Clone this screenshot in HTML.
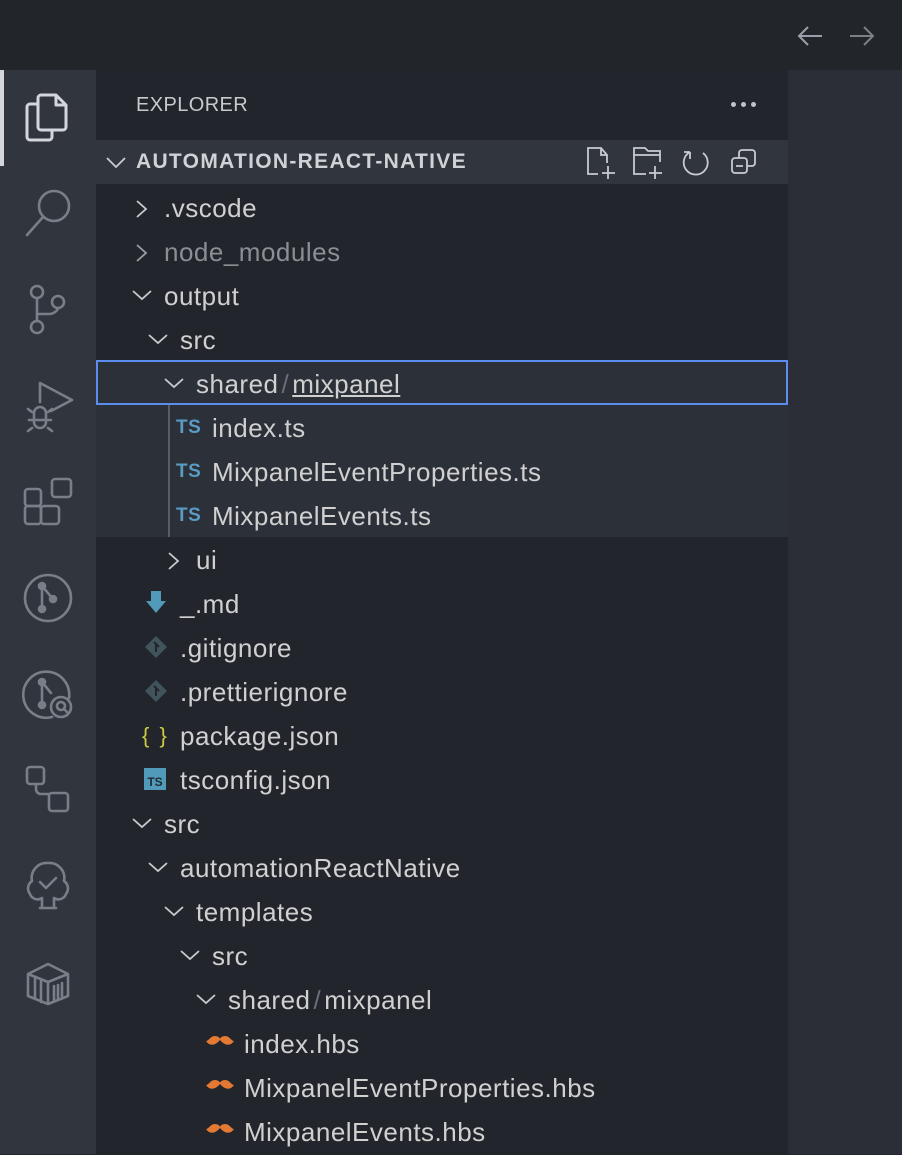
<!DOCTYPE html>
<html><head><meta charset="utf-8"><style>
*{margin:0;padding:0;box-sizing:border-box}
body{width:902px;height:1154px;background:#22252a;overflow:hidden;position:relative;font-family:"Liberation Sans",sans-serif;color:#d0d0d0}
.abs{position:absolute}
#act{left:0;top:70px;width:96px;height:1084px;background:#31353e}
#side{left:96px;top:70px;width:692px;height:1084px;background:#22252b}
#right{left:788px;top:70px;width:114px;height:1084px;background:#2b2e36}
.row{position:absolute;left:96px;width:692px;height:44px;font-size:26px;line-height:46px;white-space:nowrap;letter-spacing:0.5px}
.row span.t{position:absolute;top:0}
.row svg{position:absolute}
.ic{stroke:#7a7e87;fill:none;stroke-width:2.6;stroke-linecap:round;stroke-linejoin:round}
</style></head><body>
<div id="act" class="abs"></div>
<div class="abs" style="left:0;top:70px;width:4px;height:96px;background:#d4d6dc"></div>
<div id="side" class="abs"></div>
<div id="right" class="abs"></div>

<svg class="abs" style="left:796px;top:24px" width="28" height="24" viewBox="0 0 28 24"><path d="M26 12H3M12 3L3 12l9 9" stroke="#9aa0aa" stroke-width="2" fill="none"/></svg>
<svg class="abs" style="left:848px;top:24px" width="28" height="24" viewBox="0 0 28 24"><path d="M2 12h23M16 3l9 9-9 9" stroke="#7d8088" stroke-width="2" fill="none"/></svg>

<svg class="abs" style="left:24px;top:92px" width="48" height="52" viewBox="0 0 48 52"><path d="M14 12h-8a3 3 0 0 0-3 3v30a3 3 0 0 0 3 3h19a3 3 0 0 0 3-3v-6" stroke="#d4d6dc" stroke-width="3" fill="none"/><path d="M17 3h15l10 10v22a3 3 0 0 1-3 3H17a3 3 0 0 1-3-3V6a3 3 0 0 1 3-3zM32 3v10h10" stroke="#d4d6dc" stroke-width="3" fill="none" stroke-linejoin="round"/></svg>
<svg class="abs ic" style="left:24px;top:188px" width="50" height="50" viewBox="0 0 50 50"><circle cx="30" cy="18" r="15"/><path d="M19 29L3 47"/></svg>
<svg class="abs ic" style="left:26px;top:284px" width="44" height="52" viewBox="0 0 44 52"><circle cx="11" cy="8" r="6"/><circle cx="32" cy="18" r="6"/><circle cx="11" cy="43" r="6"/><path d="M11 14v23M11 30h12c5 0 9-4 9-6"/></svg>
<svg class="abs ic" style="left:22px;top:380px" width="52" height="56" viewBox="0 0 52 56"><path d="M18 22V3l32 17-21 11"/><path d="M7 40h22M10 32l-4-3M26 32l4-3M10 48l-4 3M26 48l4 3"/><path d="M12 33a6 6 0 0 1 12 0v9a6 6 0 0 1-12 0z"/></svg>
<svg class="abs ic" style="left:22px;top:476px" width="52" height="52" viewBox="0 0 52 52"><rect x="3" y="13" width="16" height="17" rx="3"/><rect x="3" y="30" width="16" height="18" rx="3"/><rect x="19" y="30" width="18" height="18" rx="3"/><rect x="30" y="3" width="19" height="18" rx="3"/></svg>
<svg class="abs ic" style="left:22px;top:572px" width="52" height="52" viewBox="0 0 52 52"><circle cx="26" cy="26" r="23"/><circle cx="20" cy="14" r="3" fill="#7a7e87"/><circle cx="20" cy="37" r="3" fill="#7a7e87"/><circle cx="31" cy="27" r="3" fill="#7a7e87"/><path d="M20 14v23M20 14l11 13"/></svg>
<svg class="abs ic" style="left:22px;top:668px" width="54" height="54" viewBox="0 0 54 54"><path d="M47 30A23 23 0 1 0 30 49"/><circle cx="20" cy="14" r="3" fill="#7a7e87"/><circle cx="20" cy="37" r="3" fill="#7a7e87"/><path d="M20 14v23M20 14l9 11"/><circle cx="39" cy="39" r="10"/><circle cx="39" cy="38" r="4"/><path d="M42 41l4 4"/></svg>
<svg class="abs ic" style="left:24px;top:764px" width="48" height="50" viewBox="0 0 48 50"><rect x="3" y="3" width="17" height="17" rx="3"/><rect x="25" y="29" width="19" height="18" rx="3"/><path d="M12 20v5a5 5 0 0 0 5 5h8"/></svg>
<svg class="abs ic" style="left:24px;top:860px" width="48" height="52" viewBox="0 0 48 52"><path d="M18 48v-10a8 8 0 0 1-12-4 9 9 0 0 1 2-13A15 15 0 0 1 24 3a15 15 0 0 1 16 18 9 9 0 0 1 2 13 8 8 0 0 1-12 4v10zM16 48h16"/><path d="M16 22l6 6 10-10"/></svg>
<svg class="abs ic" style="left:24px;top:960px" width="48" height="46" viewBox="0 0 48 46"><path d="M4 14l20-10 20 10v22l-20 8-20-8zM4 14l20 8 20-8M24 22v22M11 19v20M17 21v21M30 26v14M34 25v13M38 23v13"/></svg>

<div class="abs" style="left:136px;top:94px;font-size:20px;color:#c8cad0;letter-spacing:.4px">EXPLORER</div>
<div class="abs" style="left:731px;top:102px;width:30px;height:6px">
<span class="abs" style="left:0;top:0;width:5px;height:5px;border-radius:50%;background:#c0c3c9"></span>
<span class="abs" style="left:10px;top:0;width:5px;height:5px;border-radius:50%;background:#c0c3c9"></span>
<span class="abs" style="left:20px;top:0;width:5px;height:5px;border-radius:50%;background:#c0c3c9"></span></div>

<div class="abs" style="left:96px;top:140px;width:692px;height:44px;background:#31353e"></div>
<svg class="abs" style="left:105px;top:156px" width="22" height="12" viewBox="0 0 22 12"><path d="M2 2l9 9 9-9" stroke="#c8cad0" stroke-width="1.8" fill="none"/></svg>
<div class="abs" style="left:136px;top:150px;font-size:21px;font-weight:bold;color:#d0d2d6;letter-spacing:1.3px">AUTOMATION-REACT-NATIVE</div>
<svg class="abs" style="left:586px;top:146px" width="32" height="34" viewBox="0 0 32 34"><path d="M12 28H2V2h13l6 7v8M15 2v7h6M22 20v13M16 27h13" stroke="#c8cad0" stroke-width="1.8" fill="none"/></svg>
<svg class="abs" style="left:632px;top:146px" width="34" height="34" viewBox="0 0 34 34"><path d="M14 28H2V2h11l3 3h12v11M2 9h26M23 20v13M17 27h13" stroke="#c8cad0" stroke-width="1.8" fill="none"/></svg>
<svg class="abs" style="left:682px;top:148px" width="28" height="30" viewBox="0 0 28 30"><path d="M8 4A12 12 0 1 0 21 5M8 4v7M8 4H2" stroke="#c8cad0" stroke-width="1.8" fill="none"/></svg>
<svg class="abs" style="left:730px;top:148px" width="28" height="28" viewBox="0 0 28 28"><rect x="2" y="10" width="15" height="15" rx="3" stroke="#c8cad0" stroke-width="1.8" fill="none"/><path d="M9 10V5a3 3 0 0 1 3-3h10a3 3 0 0 1 3 3v10a3 3 0 0 1-3 3h-5M6 18h7" stroke="#c8cad0" stroke-width="1.8" fill="none"/></svg>

<div class="abs" style="left:96px;top:405px;width:692px;height:132px;background:#2c3039"></div>
<div class="abs" style="left:168px;top:405px;width:2px;height:132px;background:#5a5d63"></div>
<div class="abs" style="left:96px;top:360px;width:692px;height:45px;border:2px solid #5b8def;background:#2c3039"></div>

<div class="row" style="top:185px"><svg style="left:39px;top:14px" width="14" height="20" viewBox="0 0 14 20"><path d="M2 2l9 8-9 8" stroke="#c8cad0" stroke-width="1.8" fill="none"/></svg><span class="t" style="left:68px">.vscode</span></div>
<div class="row" style="top:229px;color:#8b8e94"><svg style="left:39px;top:14px" width="14" height="20" viewBox="0 0 14 20"><path d="M2 2l9 8-9 8" stroke="#9a9da3" stroke-width="1.8" fill="none"/></svg><span class="t" style="left:68px">node_modules</span></div>
<div class="row" style="top:273px"><svg style="left:35px;top:16px" width="22" height="12" viewBox="0 0 22 12"><path d="M2 2l9 8 9-8" stroke="#c8cad0" stroke-width="1.8" fill="none"/></svg><span class="t" style="left:68px">output</span></div>
<div class="row" style="top:317px"><svg style="left:51px;top:16px" width="22" height="12" viewBox="0 0 22 12"><path d="M2 2l9 8 9-8" stroke="#c8cad0" stroke-width="1.8" fill="none"/></svg><span class="t" style="left:84px">src</span></div>
<div class="row" style="top:361px"><svg style="left:67px;top:16px" width="22" height="12" viewBox="0 0 22 12"><path d="M2 2l9 8 9-8" stroke="#c8cad0" stroke-width="1.8" fill="none"/></svg><span class="t" style="left:100px">shared<span style="color:#6c6f75;margin:0 3px">/</span><span style="text-decoration:underline">mixpanel</span></span></div>
<div class="row" style="top:405px"><span class="t" style="left:80px;font-size:19px;font-weight:bold;color:#5a9bc4">TS</span><span class="t" style="left:116px">index.ts</span></div>
<div class="row" style="top:449px"><span class="t" style="left:80px;font-size:19px;font-weight:bold;color:#5a9bc4">TS</span><span class="t" style="left:116px">MixpanelEventProperties.ts</span></div>
<div class="row" style="top:493px"><span class="t" style="left:80px;font-size:19px;font-weight:bold;color:#5a9bc4">TS</span><span class="t" style="left:116px">MixpanelEvents.ts</span></div>
<div class="row" style="top:537px"><svg style="left:71px;top:14px" width="14" height="20" viewBox="0 0 14 20"><path d="M2 2l9 8-9 8" stroke="#c8cad0" stroke-width="1.8" fill="none"/></svg><span class="t" style="left:100px">ui</span></div>
<div class="row" style="top:581px"><svg style="left:49px;top:10px" width="22" height="24" viewBox="0 0 22 24"><path d="M6 0h10v10h5L11 22 1 10h5z" fill="#519aba"/></svg><span class="t" style="left:84px">_.md</span></div>
<div class="row" style="top:625px"><svg style="left:48px;top:10px" width="24" height="24" viewBox="0 0 24 24"><path d="M12 1l11 11-11 11L1 12z" fill="#41535b"/><path d="M10 7l5 5M12 9v8" stroke="#22252b" stroke-width="2"/></svg><span class="t" style="left:84px">.gitignore</span></div>
<div class="row" style="top:669px"><svg style="left:48px;top:10px" width="24" height="24" viewBox="0 0 24 24"><path d="M12 1l11 11-11 11L1 12z" fill="#41535b"/><path d="M10 7l5 5M12 9v8" stroke="#22252b" stroke-width="2"/></svg><span class="t" style="left:84px">.prettierignore</span></div>
<div class="row" style="top:713px"><span class="t" style="left:46px;font-size:22px;color:#cbcb41;letter-spacing:2px">{ }</span><span class="t" style="left:84px">package.json</span></div>
<div class="row" style="top:757px"><div style="position:absolute;left:48px;top:11px;width:22px;height:22px;background:#519aba;color:#1e2a33;font-size:12px;font-weight:bold;line-height:28px;text-align:center;letter-spacing:0">TS</div><span class="t" style="left:84px">tsconfig.json</span></div>
<div class="row" style="top:801px"><svg style="left:35px;top:16px" width="22" height="12" viewBox="0 0 22 12"><path d="M2 2l9 8 9-8" stroke="#c8cad0" stroke-width="1.8" fill="none"/></svg><span class="t" style="left:68px">src</span></div>
<div class="row" style="top:845px"><svg style="left:51px;top:16px" width="22" height="12" viewBox="0 0 22 12"><path d="M2 2l9 8 9-8" stroke="#c8cad0" stroke-width="1.8" fill="none"/></svg><span class="t" style="left:84px">automationReactNative</span></div>
<div class="row" style="top:889px"><svg style="left:67px;top:16px" width="22" height="12" viewBox="0 0 22 12"><path d="M2 2l9 8 9-8" stroke="#c8cad0" stroke-width="1.8" fill="none"/></svg><span class="t" style="left:100px">templates</span></div>
<div class="row" style="top:933px"><svg style="left:83px;top:16px" width="22" height="12" viewBox="0 0 22 12"><path d="M2 2l9 8 9-8" stroke="#c8cad0" stroke-width="1.8" fill="none"/></svg><span class="t" style="left:116px">src</span></div>
<div class="row" style="top:977px"><svg style="left:99px;top:16px" width="22" height="12" viewBox="0 0 22 12"><path d="M2 2l9 8 9-8" stroke="#c8cad0" stroke-width="1.8" fill="none"/></svg><span class="t" style="left:132px">shared<span style="color:#6c6f75;margin:0 3px">/</span>mixpanel</span></div>
<div class="row" style="top:1021px"><svg style="left:109px;top:14px" width="30" height="14" viewBox="0 0 30 14"><path d="M1 6c4 6 10 4 14-1 4 5 10 7 14 1-3 0-4-5-9-5-3 0-5 2-5 3 0-1-2-3-5-3-5 0-6 5-9 5z" fill="#e37933"/></svg><span class="t" style="left:148px">index.hbs</span></div>
<div class="row" style="top:1065px"><svg style="left:109px;top:14px" width="30" height="14" viewBox="0 0 30 14"><path d="M1 6c4 6 10 4 14-1 4 5 10 7 14 1-3 0-4-5-9-5-3 0-5 2-5 3 0-1-2-3-5-3-5 0-6 5-9 5z" fill="#e37933"/></svg><span class="t" style="left:148px">MixpanelEventProperties.hbs</span></div>
<div class="row" style="top:1109px"><svg style="left:109px;top:14px" width="30" height="14" viewBox="0 0 30 14"><path d="M1 6c4 6 10 4 14-1 4 5 10 7 14 1-3 0-4-5-9-5-3 0-5 2-5 3 0-1-2-3-5-3-5 0-6 5-9 5z" fill="#e37933"/></svg><span class="t" style="left:148px">MixpanelEvents.hbs</span></div>
</body></html>
